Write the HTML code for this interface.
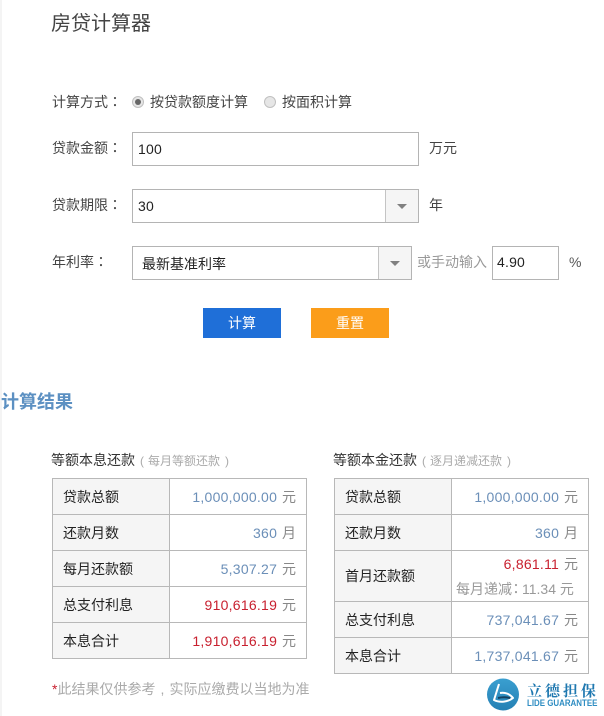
<!DOCTYPE html>
<html lang="zh">
<head>
<meta charset="utf-8">
<style>
html,body{margin:0;padding:0;background:#fff}
body{width:604px;height:716px;position:relative;overflow:hidden;font-family:"Liberation Sans","Noto Sans CJK SC",sans-serif;font-size:14px;color:#333}
.a{position:absolute;white-space:nowrap}
.box{position:absolute;box-sizing:border-box;border:1px solid #b4b4b4;background:#fff}
.arrow{position:absolute;box-sizing:border-box;background:#f5f5f5;border-left:1px solid #c4c4c4;top:0;bottom:0}
.arrow i{position:absolute;left:50%;top:50%;margin:-2px 0 0 -5px;border:5px solid transparent;border-top:5px solid #808080;border-bottom:0}
.val{position:absolute;color:#222;font-size:14px;line-height:20px;white-space:nowrap;letter-spacing:.2px}
.lab{position:absolute;left:52px;color:#444;line-height:20px;white-space:nowrap;font-size:14px}
.c{font-family:"Liberation Sans","Noto Sans CJK TC",sans-serif}
.radio{position:absolute;width:12px;height:12px;border-radius:50%;box-sizing:border-box;border:1px solid #c0c0c0;background:#e6e6e6}
.radio.on::after{content:"";position:absolute;left:2px;top:2px;width:6px;height:6px;border-radius:50%;background:#666}
.btn{position:absolute;top:308px;width:78px;height:30px;line-height:30px;text-align:center;color:#fff;font-size:14px}
table{position:absolute;top:478px;width:255px;border-collapse:collapse;table-layout:fixed;font-size:14px}
td{border:1px solid #b8b8b8;padding:0;height:35px;box-sizing:border-box}
td.k{width:117px;background:#f5f5f5;color:#222;padding-left:10px;box-sizing:border-box}
td.v{text-align:right;padding-right:10px;color:#777;font-size:14px}
td.v b{font-weight:normal;color:#6b8fb8;letter-spacing:.25px}
td.v b.r{color:#c8202f}
td.v span.u{font-size:14px;color:#888;margin-left:1px}
.sub{color:#999;font-size:14px;text-align:left;padding-left:4px}
.h small{color:#aaa;font-size:12px}
</style>
</head>
<body>
<div class="a" style="left:0;top:0;width:2px;height:716px;background:#f4f4f4"></div>

<div class="a" style="left:51px;top:11px;font-size:20px;line-height:26px;color:#444">房贷计算器</div>

<div class="lab" style="top:92px">计算方式<span class="c" lang="zh-Hant">：</span></div>
<div class="radio on" style="left:132px;top:96px"></div>
<div class="a" style="left:150px;top:92px;line-height:20px;color:#444">按贷款额度计算</div>
<div class="radio" style="left:264px;top:96px"></div>
<div class="a" style="left:282px;top:92px;line-height:20px;color:#444">按面积计算</div>

<div class="lab" style="top:138px">贷款金额<span class="c" lang="zh-Hant">：</span></div>
<div class="box" style="left:132px;top:132px;width:287px;height:34px"></div>
<div class="val" style="left:138px;top:139px">100</div>
<div class="a" style="left:429px;top:138px;line-height:20px;color:#444">万元</div>

<div class="lab" style="top:195px">贷款期限<span class="c" lang="zh-Hant">：</span></div>
<div class="box" style="left:132px;top:189px;width:287px;height:34px"><div class="arrow" style="left:252px;width:33px"><i></i></div></div>
<div class="val" style="left:138px;top:196px">30</div>
<div class="a" style="left:429px;top:195px;line-height:20px;color:#444">年</div>

<div class="lab" style="top:252px">年利率<span class="c" lang="zh-Hant">：</span></div>
<div class="box" style="left:132px;top:246px;width:280px;height:34px"><div class="arrow" style="left:245px;width:33px"><i></i></div></div>
<div class="a" style="left:142px;top:254px;line-height:20px;color:#222">最新基准利率</div>
<div class="a" style="left:417px;top:252px;line-height:20px;color:#999">或手动输入</div>
<div class="box" style="left:492px;top:246px;width:67px;height:34px"></div>
<div class="val" style="left:497px;top:252px">4.90</div>
<div class="a" style="left:569px;top:252px;line-height:20px;color:#555">%</div>

<div class="btn" style="left:203px;background:#1f6fd8">计算</div>
<div class="btn" style="left:311px;background:#fb9d1a">重置</div>

<div class="a" style="left:1px;top:390px;font-size:18px;line-height:24px;font-weight:bold;color:#5c90c2">计算结果</div>

<div class="a h" style="left:51px;top:450px;line-height:20px;color:#333">等额本息还款<small style="margin-left:5px">(</small><small style="margin-left:4px">每月等额还款</small><small style="margin-left:5px">)</small></div>
<table style="left:52px">
<tr style="height:36px"><td class="k">贷款总额</td><td class="v"><b>1,000,000.00</b> <span class="u">元</span></td></tr>
<tr style="height:36px"><td class="k">还款月数</td><td class="v"><b>360</b> <span class="u">月</span></td></tr>
<tr style="height:36px"><td class="k">每月还款额</td><td class="v"><b>5,307.27</b> <span class="u">元</span></td></tr>
<tr style="height:36px"><td class="k">总支付利息</td><td class="v"><b class="r">910,616.19</b> <span class="u">元</span></td></tr>
<tr style="height:36px"><td class="k">本息合计</td><td class="v"><b class="r">1,910,616.19</b> <span class="u">元</span></td></tr>
</table>

<div class="a h" style="left:333px;top:450px;line-height:20px;color:#333">等额本金还款<small style="margin-left:5px">(</small><small style="margin-left:4px">逐月递减还款</small><small style="margin-left:5px">)</small></div>
<table style="left:334px">
<tr style="height:36px"><td class="k">贷款总额</td><td class="v"><b>1,000,000.00</b> <span class="u">元</span></td></tr>
<tr style="height:36px"><td class="k">还款月数</td><td class="v"><b>360</b> <span class="u">月</span></td></tr>
<tr style="height:51px"><td class="k">首月还款额</td><td class="v"><div style="line-height:20px;margin-top:1px"><b class="r">6,861.11</b> <span class="u">元</span></div><div class="sub" style="line-height:20px;margin-top:5px">每月递减<span class="c" lang="zh-Hant" style="position:relative;left:-3px;margin-right:-4px">：</span>11.34 元</div></td></tr>
<tr style="height:36px"><td class="k">总支付利息</td><td class="v"><b>737,041.67</b> <span class="u">元</span></td></tr>
<tr style="height:36px"><td class="k">本息合计</td><td class="v"><b>1,737,041.67</b> <span class="u">元</span></td></tr>
</table>

<div class="a" style="left:52px;top:679px;line-height:20px;color:#aaa"><span style="color:#c8202f">*</span>此结果仅供参考<span style="display:inline-block;width:14px;text-align:center">,</span>实际应缴费以当地为准</div>

<svg class="a" style="left:486px;top:678px" width="34" height="34" viewBox="0 0 34 34">
<defs><linearGradient id="g" x1="0" y1="0" x2="0" y2="1"><stop offset="0" stop-color="#3a9fd0"/><stop offset="1" stop-color="#2580b4"/></linearGradient></defs>
<circle cx="17" cy="16.5" r="16" fill="url(#g)"/>
<path d="M13 6 L8 22 C14 25 22 24 27 20 C24 16 19 14 14 15" fill="none" stroke="#fff" stroke-width="2" stroke-linejoin="round"/>
<path d="M12 20 C16 19 20 19 24 20" fill="none" stroke="#14405f" stroke-width="2"/>
</svg>
<div class="a" style="left:527px;top:683px;font-family:'Liberation Serif','Noto Serif CJK SC',serif;font-size:15px;line-height:18px;font-weight:bold;color:#1f78b0;letter-spacing:3px">立德担保</div>
<div class="a" style="left:527px;top:698px;font-size:9px;line-height:10px;font-weight:bold;color:#2f8dc2;transform:scaleX(.88);transform-origin:left center">LIDE GUARANTEE</div>
</body>
</html>
